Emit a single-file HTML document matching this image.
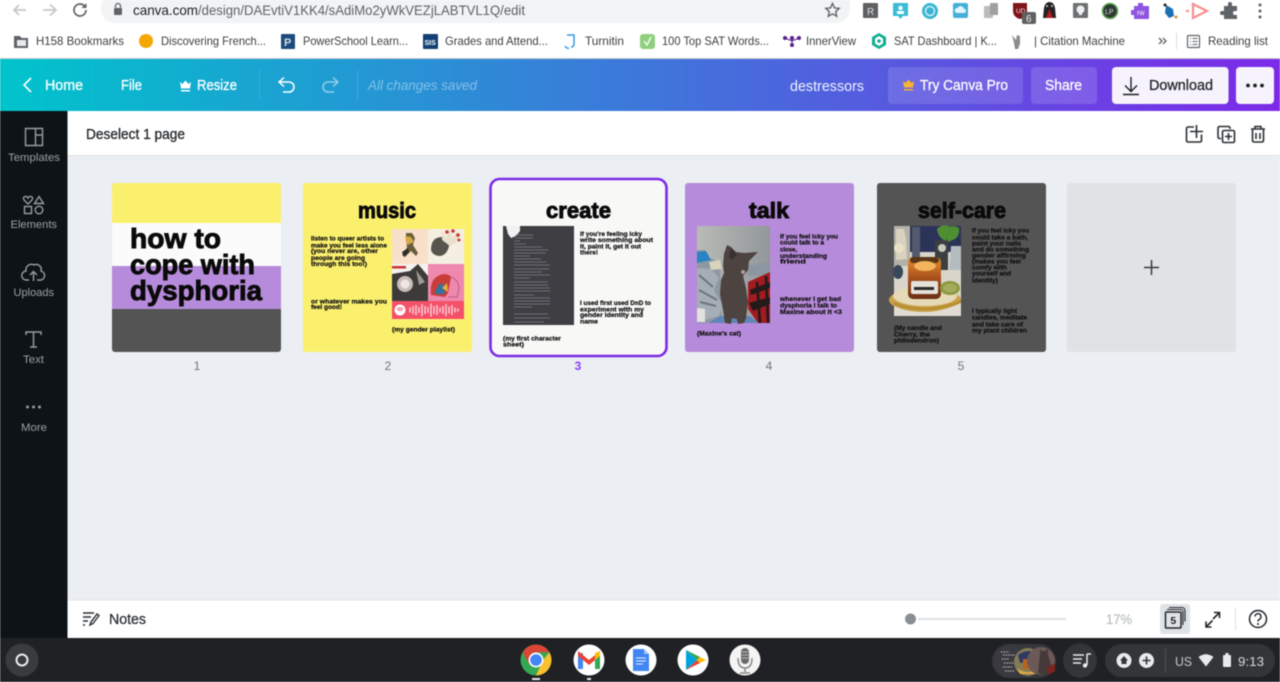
<!DOCTYPE html>
<html lang="en"><head><meta charset="utf-8"><title>destressors - Canva</title>
<style>
html,body{margin:0;padding:0;width:1280px;height:682px;overflow:hidden;background:#fff}
svg{display:block;filter:blur(.5px)}
text{font-family:"Liberation Sans",sans-serif}
.c{font-size:12px;fill:#5f6368}
.b{font-size:12px;fill:#3c4043}
.w{font-size:14.500px;fill:#fff;stroke:#fff;stroke-width:.28}
.s{font-size:11px;fill:#9da0a3}
.h{font-size:22px;font-weight:bold;fill:#0a0a0a;stroke:#0a0a0a;stroke-width:.9}
.t{font-size:28px;font-weight:bold;fill:#0a0a0a;stroke:#0a0a0a;stroke-width:.9}
.p{font-size:6.800px;font-weight:bold;fill:#111;stroke:#111;stroke-width:.22}
.n{font-size:12px;fill:#6f7680}
.i{fill:none;stroke:#2b2f33;stroke-width:1.6}
.g{fill:none;stroke:#9a9da0;stroke-width:1.4}
</style></head><body>
<svg width="1280" height="682" viewBox="0 0 1280 682" xmlns="http://www.w3.org/2000/svg">
<defs>
<linearGradient id="top" x1="0" x2="1" y1="0" y2="0"><stop offset="0" stop-color="#00c4cc"/><stop offset="1" stop-color="#7d2ae8"/></linearGradient>
<linearGradient id="jar" x1="0" x2="0" y1="0" y2="1"><stop offset="0" stop-color="#e8902f"/><stop offset=".5" stop-color="#a8501c"/><stop offset="1" stop-color="#6a2f14"/></linearGradient>
<linearGradient id="wall" x1="0" x2="1" y1="0" y2="0"><stop offset="0" stop-color="#b9bbb6"/><stop offset="1" stop-color="#92979b"/></linearGradient>
</defs>

<!-- browser chrome -->
<rect width="1280" height="59" fill="#fff"/>
<rect y="58" width="1280" height="1" fill="#c8cacc"/>
<path d="M26 10H14M19 5l-5 5 5 5" fill="none" stroke="#c4c7cb" stroke-width="1.700"/>
<path d="M44 10H57M51 4.500l6 5.500-6 5.500" fill="none" stroke="#c4c7cb" stroke-width="1.700" transform="translate(-1 0)"/>
<path d="M86 10a6 6 0 1 1-1.800-4.300" fill="none" stroke="#5f6368" stroke-width="1.700"/><path d="M86.500 3v5h-5z" fill="#5f6368"/>
<path d="M115 -5H850V9a14 14 0 0 1-14 14H115A14 14 0 0 1 101 9A14 14 0 0 1 115 -5Z" fill="#f1f3f4"/>
<rect x="114" y="8" width="8" height="7" rx="1" fill="#5f6368"/><path d="M115.500 8V6a2.500 2.500 0 0 1 5 0v2" fill="none" stroke="#5f6368" stroke-width="1.200"/>
<text x="133" y="15" font-size="14" fill="#202124" textLength="65" lengthAdjust="spacingAndGlyphs">canva.com</text>
<text x="198" y="15" font-size="14" fill="#5f6368" textLength="327" lengthAdjust="spacingAndGlyphs">/design/DAEvtiV1KK4/sAdiMo2yWkVEZjLABTVL1Q/edit</text>
<path d="M832.500 3.500l2 4.400 4.700.5-3.500 3.200 1 4.700-4.200-2.400-4.200 2.400 1-4.700-3.500-3.200 4.700-.5z" fill="none" stroke="#5f6368" stroke-width="1.400"/>

<!-- extensions -->
<rect x="863" y="3" width="15" height="15" rx="1" fill="#5e6062"/><text x="867" y="15" font-size="10" fill="#ddd">R</text>
<path d="M893 3h15v13h-5l-2.500 3-2.500-3h-5z" fill="#39bcd8"/><circle cx="900.500" cy="8" r="2.200" fill="#fff"/><rect x="897" y="11" width="7" height="3" fill="#fff"/>
<circle cx="930" cy="11" r="8" fill="#39b5cf"/><circle cx="930" cy="11" r="4.500" fill="none" stroke="#cdeef5" stroke-width="1.500"/>
<rect x="953" y="3" width="15" height="15" rx="2" fill="#45afd8"/><path d="M957 13a2.500 2.500 0 0 1 .5-5 3.500 3.500 0 0 1 6.500 1 2 2 0 0 1 0 4z" fill="#e4f5fb"/>
<rect x="984" y="6" width="9" height="12" rx="1" fill="#b9bbbc"/><rect x="990" y="3" width="8" height="12" rx="1" fill="#9ea0a1"/>
<path d="M1013 3h14v8q0 6-7 8-7-2-7-8z" fill="#7f1519"/><text x="1016" y="13" font-size="6.500" fill="#eee">UD</text>
<rect x="1022" y="12" width="14" height="12" rx="2" fill="#5f6062"/><text x="1026" y="22" font-size="10" fill="#eee">6</text>
<path d="M1043 18l1-10q1-6 5.500-6t5.500 6l1 10z" fill="#222"/><path d="M1046 18l3.500-9 3.500 9z" fill="#b81c22"/><circle cx="1047" cy="6" r="1" fill="#ccc"/><circle cx="1052" cy="6" r="1" fill="#ccc"/>
<rect x="1073" y="3" width="15" height="15" rx="1" fill="#6e7173"/><circle cx="1080.500" cy="9.500" r="4" fill="#f0f0f0"/><rect x="1079" y="13" width="3" height="2" fill="#f0f0f0"/>
<circle cx="1110" cy="11" r="7.500" fill="#303a34" stroke="#5faa55" stroke-width="1.500"/><text x="1105" y="14" font-size="7" fill="#ddd">LP</text>
<path d="M1134 6h4v-3h5v3h6v13h-15v-4h-3v-5h3z" fill="#8d55e0"/><text x="1137" y="15" font-size="7" fill="#fff">rw</text>
<path d="M1166 5l7 4 1 7-5 2-4-5z" fill="#1d6fb5"/><circle cx="1165" cy="5" r="1.500" fill="#222"/><circle cx="1176" cy="17" r="1.500" fill="#e0902c"/>
<path d="M1193 4l14 7-14 7zM1189 11h-3" fill="none" stroke="#f78f8f" stroke-width="2.200"/>
<path d="M1224 6h4v-2a2 2 0 0 1 4 0v2h5v5h-2a2 2 0 0 0 0 4h2v4h-13v-4h-2a2 2 0 0 1 0-4h2z" fill="#5f6368"/>
<circle cx="1260" cy="5" r="1.500" fill="#5f6368"/><circle cx="1260" cy="11" r="1.500" fill="#5f6368"/><circle cx="1260" cy="17" r="1.500" fill="#5f6368"/>

<!-- bookmarks -->
<path d="M14 36h6l1.500 2H28v10H14z" fill="#5f6368"/><rect x="17" y="40" width="9" height="6" fill="#e8eaed"/>
<text class="b" x="36" y="45" textLength="88" lengthAdjust="spacingAndGlyphs">H158 Bookmarks</text>
<circle cx="146" cy="41" r="7" fill="#f4a700"/>
<text class="b" x="161" y="45" textLength="105" lengthAdjust="spacingAndGlyphs">Discovering French...</text>
<rect x="281" y="34" width="14" height="15" rx="1" fill="#1b4a7c"/><text x="284" y="46" font-size="11" font-weight="bold" fill="#cfd9e4">P</text>
<text class="b" x="303" y="45" textLength="105" lengthAdjust="spacingAndGlyphs">PowerSchool Learn...</text>
<rect x="423" y="34" width="15" height="15" rx="1" fill="#133f75"/><text x="424.500" y="45" font-size="7" font-weight="bold" fill="#fff">SIS</text>
<text class="b" x="445" y="45" textLength="103" lengthAdjust="spacingAndGlyphs">Grades and Attend...</text>
<path d="M567 35h7v9q0 3-3 3M565 46q2 3 4 2" fill="none" stroke="#3a9be0" stroke-width="1.500"/>
<text class="b" x="585" y="45" textLength="39" lengthAdjust="spacingAndGlyphs">Turnitin</text>
<rect x="640" y="34" width="15" height="15" rx="3" fill="#8fd07f"/><path d="M644 41l3 4 4-8" fill="none" stroke="#fff" stroke-width="1.300"/>
<text class="b" x="662" y="45" textLength="107" lengthAdjust="spacingAndGlyphs">100 Top SAT Words...</text>
<circle cx="785" cy="38" r="2" fill="#5a1e8c"/><circle cx="799" cy="38" r="2" fill="#5a1e8c"/><circle cx="792" cy="38" r="2" fill="#5a1e8c"/><circle cx="792" cy="45" r="2" fill="#5a1e8c"/><path d="M785 38l7 3 7-3M792 38v7" fill="none" stroke="#5a1e8c"/>
<text class="b" x="806" y="45" textLength="50" lengthAdjust="spacingAndGlyphs">InnerView</text>
<path d="M879 33l7 4v8l-7 4-7-4v-8z" fill="#0fae91"/><path d="M879 36l4 2.500v5l-4 2.500-4-2.500v-5z" fill="#fff"/><circle cx="879" cy="41" r="1.800" fill="#0fae91"/>
<text class="b" x="894" y="45" textLength="103" lengthAdjust="spacingAndGlyphs">SAT Dashboard | K...</text>
<path d="M1012 35l4 5 1-5 3 1v8l-2 5h-3l-1-6z" fill="#8a8d8a"/>
<text class="b" x="1034" y="45" textLength="91" lengthAdjust="spacingAndGlyphs">| Citation Machine</text>
<path d="M1159 38l3 3-3 3M1163 38l3 3-3 3" fill="none" stroke="#5f6368" stroke-width="1.300"/>
<rect x="1176" y="33" width="1" height="16" fill="#dadce0"/>
<rect x="1187.500" y="35.500" width="12" height="12" rx="1" fill="none" stroke="#5f6368" stroke-width="1.200"/><path d="M1190 38.500h1M1192.500 38.500h5M1190 41.500h1M1192.500 41.500h5M1190 44.500h1M1192.500 44.500h5" stroke="#5f6368"/>
<text class="b" x="1208" y="45" textLength="60" lengthAdjust="spacingAndGlyphs">Reading list</text>

<!-- canva top bar -->
<rect y="59" width="1280" height="52" fill="url(#top)"/>
<path d="M31 78l-7 7 7 7" fill="none" stroke="#fff" stroke-width="1.600"/>
<text class="w" x="45" y="90" textLength="38" lengthAdjust="spacingAndGlyphs">Home</text>
<text class="w" x="121" y="90" textLength="21" lengthAdjust="spacingAndGlyphs">File</text>
<path d="M180 82l2.500 2 3-3.500 3 3.500 2.500-2-1 6.500h-9zM181 90h9v1.500h-9z" fill="#fff"/>
<text class="w" x="197" y="90" textLength="40" lengthAdjust="spacingAndGlyphs">Resize</text>
<rect x="259" y="70" width="1" height="30" fill="#fff" fill-opacity=".13"/>
<path d="M284 78l-5 4.500 5 4.500M279 82.500h10a5 5 0 0 1 0 10h-6" fill="none" stroke="#fff" stroke-width="1.500" transform="translate(0 -.5)"/>
<path d="M333 78l5 4.500-5 4.500M338 82.500h-10a5 5 0 0 0 0 10h6" fill="none" stroke="#fff" stroke-opacity=".5" stroke-width="1.500" transform="translate(0 -.5)"/>
<rect x="357" y="70" width="1" height="30" fill="#fff" fill-opacity=".13"/>
<text x="368" y="90" font-size="14" font-style="italic" fill="#fff" fill-opacity=".42" textLength="109" lengthAdjust="spacingAndGlyphs">All changes saved</text>
<text x="790" y="91" font-size="14.500" fill="#fff" fill-opacity=".92" textLength="74" lengthAdjust="spacingAndGlyphs">destressors</text>
<rect x="888" y="67" width="135" height="37" rx="4" fill="#fff" fill-opacity=".13"/>
<path d="M903 81l2.500 2 3-3.500 3 3.500 2.500-2-1 6.500h-9zM904 89h9v1.500h-9z" fill="#f9b233"/>
<text class="w" x="920" y="90" textLength="88" lengthAdjust="spacingAndGlyphs">Try Canva Pro</text>
<rect x="1031" y="67" width="66" height="37" rx="4" fill="#fff" fill-opacity=".15"/>
<text class="w" x="1045" y="90" textLength="37" lengthAdjust="spacingAndGlyphs">Share</text>
<rect x="1112" y="67" width="116.500" height="37" rx="4" fill="#f6f3fd"/>
<path d="M1131 77v14M1125 85.500l6 6 6-6M1123 94.500h16" fill="none" stroke="#1c1f22" stroke-width="1.400"/>
<text x="1149" y="90" font-size="14.500" fill="#22262a" stroke="#22262a" stroke-width=".28" textLength="64" lengthAdjust="spacingAndGlyphs">Download</text>
<rect x="1236" y="67" width="38" height="37" rx="4" fill="#f6f3fd"/>
<circle cx="1248" cy="85.500" r="1.900" fill="#1c1f22"/><circle cx="1255" cy="85.500" r="1.900" fill="#1c1f22"/><circle cx="1262" cy="85.500" r="1.900" fill="#1c1f22"/>

<!-- sidebar -->
<rect y="111" width="67.500" height="527" fill="#0e1318"/>
<path d="M25.500 128.500h17v17h-17zM35.500 128.500v17M35.500 135h7" class="g"/>
<text class="s" x="8" y="161" textLength="52" lengthAdjust="spacingAndGlyphs">Templates</text>
<path d="M28 204l-4-4q-1.500-3 1-3.500 2-.2 3 1.500 1-1.700 3-1.500 2.500.5 1 3.500zM39 196.500l4.500 7h-9z" class="g"/><rect x="24.500" y="206.500" width="7" height="7" class="g"/><circle cx="39" cy="210" r="3.800" class="g"/>
<text class="s" x="10.500" y="228" textLength="46.500" lengthAdjust="spacingAndGlyphs">Elements</text>
<path d="M29 280h-2.500a4.500 4.500 0 0 1-.5-9 5.500 5.500 0 0 1 8-6 5 5 0 0 1 7 6 4.500 4.500 0 0 1-2 9H37M33.500 281v-9M30 275l3.500-3.500 3.500 3.500" class="g"/>
<text class="s" x="13.500" y="296" textLength="40.500" lengthAdjust="spacingAndGlyphs">Uploads</text>
<path d="M26 335v-3h15v3M33.500 332v15M30 347h7" class="g"/>
<text class="s" x="23" y="363" textLength="21" lengthAdjust="spacingAndGlyphs">Text</text>
<circle cx="27.500" cy="407" r="1.500" fill="#9a9da0"/><circle cx="33.500" cy="407" r="1.500" fill="#9a9da0"/><circle cx="39.500" cy="407" r="1.500" fill="#9a9da0"/>
<text class="s" x="21" y="431" textLength="26" lengthAdjust="spacingAndGlyphs">More</text>

<!-- main -->
<rect x="67.500" y="111" width="1212.500" height="45" fill="#fff"/>
<rect x="67.500" y="156" width="1212.500" height="444" fill="#ebeef2"/>
<rect x="67.500" y="155" width="1212.500" height="1" fill="#dfe2e6"/>
<text x="86" y="139" font-size="14.500" fill="#23272b" stroke="#23272b" stroke-width=".3" textLength="99" lengthAdjust="spacingAndGlyphs">Deselect 1 page</text>
<path d="M1194 127.500h-6a1.500 1.500 0 0 0-1.500 1.500v12a1.500 1.500 0 0 0 1.500 1.500h12a1.500 1.500 0 0 0 1.500-1.500v-6M1196.500 125.500v13M1190 132h13" class="i" transform="translate(0 -.5)"/>
<path d="M1221 138.500h-1.500a1.500 1.500 0 0 1-1.500-1.500v-9a1.500 1.500 0 0 1 1.500-1.500h9a1.500 1.500 0 0 1 1.500 1.500v1" class="i"/><rect x="1222.500" y="130.500" width="12" height="12" rx="1.500" class="i"/><path d="M1228.500 133v7M1225 136.500h7" class="i"/>
<path d="M1251 129h14M1255 129v-2.500h6v2.500M1252.500 129.500v11a1.500 1.500 0 0 0 1.500 1.500h8a1.500 1.500 0 0 0 1.500-1.500v-11M1256 133v6M1260 133v6" class="i"/>

<!-- slide 1 -->
<rect x="112" y="183" width="169" height="169" rx="3" fill="#545454"/>
<path d="M112 223v-37a3 3 0 0 1 3-3h163a3 3 0 0 1 3 3v37z" fill="#fbf06e"/>
<rect x="112" y="223" width="169" height="43" fill="#fbfbfb"/>
<rect x="112" y="266" width="169" height="43" fill="#b78bdb"/>
<text class="t" x="130" y="248" textLength="91" lengthAdjust="spacingAndGlyphs">how to</text>
<text class="t" x="130" y="274" textLength="125" lengthAdjust="spacingAndGlyphs">cope with</text>
<text class="t" x="130" y="300" textLength="132" lengthAdjust="spacingAndGlyphs">dysphoria</text>
<text class="n" x="197" y="370" text-anchor="middle">1</text>

<!-- slide 2 -->
<rect x="303" y="183" width="169" height="169" rx="3" fill="#fbf06e"/>
<text class="h" x="358" y="218" textLength="58" lengthAdjust="spacingAndGlyphs">music</text>
<text class="p" x="311" y="240.500" textLength="73" lengthAdjust="spacingAndGlyphs">listen to queer artists to</text>
<text class="p" x="311" y="247.500" textLength="76" lengthAdjust="spacingAndGlyphs">make you feel less alone</text>
<text class="p" x="311" y="253" textLength="67" lengthAdjust="spacingAndGlyphs">(you never are, other</text>
<text class="p" x="311" y="260" textLength="54" lengthAdjust="spacingAndGlyphs">people are going</text>
<text class="p" x="311" y="266" textLength="56" lengthAdjust="spacingAndGlyphs">through this too!)</text>
<text class="p" x="311" y="303.500" textLength="76" lengthAdjust="spacingAndGlyphs">or whatever makes you</text>
<text class="p" x="311" y="309" textLength="31" lengthAdjust="spacingAndGlyphs">feel good!</text>
<text class="p" x="392" y="331.500" textLength="63" lengthAdjust="spacingAndGlyphs">(my gender playlist)</text>
<rect x="392" y="229" width="36" height="35" fill="#f8e0ca"/>
<path d="M406 233l6 0 3 5-2 7 5 8-2 3-5-5-6 6-3-2 5-7-1-8z" fill="#6a5f3a"/><path d="M405 236l6 1 3 5-7 3z" fill="#d8a848"/><path d="M402 252l6-4 1 4-5 5z" fill="#2c2c28"/>
<rect x="428" y="229" width="36" height="35" fill="#f5efe2"/>
<path d="M431 250q0-13 11-13 6 1 7 9-2 9-9 10-7 0-9-6z" fill="#55544f"/><path d="M442 231l4 7 4-8 3 8 3-6 4 8-10 6-8-6z" fill="#eadfce"/><circle cx="447" cy="232" r="1.800" fill="#c8392f"/><circle cx="453" cy="231" r="1.800" fill="#c8392f"/><circle cx="458" cy="235" r="1.800" fill="#c8392f"/><circle cx="459" cy="240" r="1.500" fill="#c8392f"/>
<rect x="392" y="264" width="36" height="37" fill="#f4f2ef"/>
<path d="M392 274l18-3 8-7 10 12v25h-36z" fill="#3c3b39"/><circle cx="405" cy="284" r="8" fill="#c9bdb8"/><circle cx="405" cy="284" r="4.500" fill="#f2e6e4"/><path d="M416 270l9 12-6 3z" fill="#9a9a94"/><rect x="392" y="266" width="14" height="2.500" fill="#c33"/>
<rect x="428" y="264" width="36" height="37" fill="#ef88ae"/>
<path d="M431 295q-2-19 13-21 5 0 7 3l-3 16-3 4z" fill="#c93d3a"/><path d="M435 294q1-9 8-11l2 11z" fill="#3273a0"/><path d="M442 288l5-5 1 9z" fill="#e4b03b"/><path d="M451 277q8 3 8 12l-2 8h-9" fill="none" stroke="#b95f86"/>
<rect x="392" y="301" width="72" height="18" fill="#f4506a"/>
<circle cx="400" cy="310" r="5.500" fill="#fff"/><path d="M397 308.500q3-1 6 0M397.500 310.500q2.500-1 5 0" stroke="#f4506a" fill="none"/>
<path d="M410 307.500v5M413 306v8M416 305v10M419 307v6M422 304v12M425 306v8M428 307v6M431 303.500v13M434 306v8M437 305v10M440 307.500v5M443 306v8M446 304v12M449 306.500v7M452 305v10M455 307.500v5M458 308.500v3" stroke="#fcd4da" stroke-width="1.400"/>
<text class="n" x="388" y="370" text-anchor="middle">2</text>

<!-- slide 3 -->
<rect x="490.500" y="179" width="176" height="177" rx="9" fill="#f8f8f7" stroke="#7d2ae8" stroke-width="2.600"/>
<text class="h" x="546" y="218" textLength="65" lengthAdjust="spacingAndGlyphs">create</text>
<rect x="503" y="226" width="71" height="99" fill="#3e3e43"/>
<path d="M506 226h14v5l-4 5-5 2-3-4z" fill="#f1f1f1"/>
<path d="M515 235h18M515 238h18M514 241h6M514 244h12M514 247h28M514 250h34M514 253h32M514 256h16M514 259h27M514 262h32M514 265h36M514 269h35M514 272h28M514 275h36M514 278h16M514 282h34M514 285h34M514 288h36M514 291h36M514 295h20M514 298h36M514 301h36M514 304h36M514 307h18M514 314h34M514 318h36M514 322h30" stroke="#85858b" stroke-width=".9" stroke-opacity=".7"/>
<text class="p" x="580" y="236" textLength="62" lengthAdjust="spacingAndGlyphs">if you're feeling icky</text>
<text class="p" x="580" y="242" textLength="73" lengthAdjust="spacingAndGlyphs">write something about</text>
<text class="p" x="580" y="248.500" textLength="61" lengthAdjust="spacingAndGlyphs">it, paint it, get it out</text>
<text class="p" x="580" y="254.500" textLength="18" lengthAdjust="spacingAndGlyphs">there!</text>
<text class="p" x="580" y="305" textLength="71" lengthAdjust="spacingAndGlyphs">I used first used DnD to</text>
<text class="p" x="580" y="311.500" textLength="64" lengthAdjust="spacingAndGlyphs">experiment with my</text>
<text class="p" x="580" y="317" textLength="63" lengthAdjust="spacingAndGlyphs">gender identity and</text>
<text class="p" x="580" y="323.500" textLength="18" lengthAdjust="spacingAndGlyphs">name</text>
<text class="p" x="503" y="340.500" textLength="58" lengthAdjust="spacingAndGlyphs">(my first character</text>
<text class="p" x="503" y="346.500" textLength="21" lengthAdjust="spacingAndGlyphs">sheet)</text>
<text x="578" y="370" text-anchor="middle" font-size="12" font-weight="bold" fill="#8b3dff">3</text>

<!-- slide 4 -->
<rect x="685" y="183" width="169" height="169" rx="3" fill="#b78bdb"/>
<text class="h" x="749" y="218" textLength="40" lengthAdjust="spacingAndGlyphs">talk</text>
<rect x="697" y="226" width="73" height="97" fill="url(#wall)"/>
<path d="M697 250l8 0 5 8 10 5 2 60h-25z" fill="#8e98a3"/>
<path d="M697 252l9-1 5 9-14 3z" fill="#2a83c2"/>
<path d="M709 262l11-2 2 9-11 1z" fill="#d9d3bd"/>
<path d="M697 268l14 1 8 9-5 12 9 16-4 10-22 6z" fill="#a5aeb6"/><path d="M699 275l14 12M699 290l18 10M700 302l16 4" stroke="#6c7580" stroke-width="2"/><path d="M697 308l8 1v13h-8z" fill="#e4e2de"/>
<path d="M708 323l12-7 30 0 9 7z" fill="#5f86b5"/>
<path d="M746 266l24-4v12l-22 2z" fill="#8c96a0"/>
<path d="M748 282l22-10v51h-12l-10-14z" fill="#a11b20"/>
<path d="M750 290l20-8v6l-19 7zM749 303l21-6v7l-17 7zM757 282l3 41M766 276l2 47" stroke="none" fill="#231a1a"/><path d="M757 282l3 41M766 276l2 47" stroke="#231a1a" stroke-width="2.600"/>
<path d="M723 265l1-11 3-9 4 2 5 5 8 1 14-1-9 9-1 9-5 6 3 12 2 14-2 16-2 5-6 1-1-5-5-1-1 6-6-1-2-13-3-16 1-14 3-7z" fill="#4d4341"/>
<path d="M731 248l6 7-5 5-3-3z" fill="#3a3130"/><circle cx="743" cy="272" r="2" fill="#b89b98"/>
<text class="p" x="780" y="238.500" textLength="58" lengthAdjust="spacingAndGlyphs">if you feel icky you</text>
<text class="p" x="780" y="244.500" textLength="44" lengthAdjust="spacingAndGlyphs">could talk to a</text>
<text class="p" x="780" y="251.500" textLength="17" lengthAdjust="spacingAndGlyphs">close,</text>
<text class="p" x="780" y="258" textLength="47" lengthAdjust="spacingAndGlyphs">understanding</text>
<text class="p" x="780" y="263.500" textLength="26" lengthAdjust="spacingAndGlyphs">friend</text>
<text class="p" x="780" y="301" textLength="61" lengthAdjust="spacingAndGlyphs">whenever I get bad</text>
<text class="p" x="780" y="307.500" textLength="57" lengthAdjust="spacingAndGlyphs">dysphoria I talk to</text>
<text class="p" x="780" y="314" textLength="62" lengthAdjust="spacingAndGlyphs">Maxine about it &lt;3</text>
<text class="p" x="697" y="335.500" textLength="44" lengthAdjust="spacingAndGlyphs">(Maxine's cat)</text>
<text class="n" x="769" y="370" text-anchor="middle">4</text>

<!-- slide 5 -->
<rect x="877" y="183" width="169" height="169" rx="3" fill="#545454"/>
<text class="h" x="918" y="218" textLength="88" lengthAdjust="spacingAndGlyphs">self-care</text>
<rect x="894" y="226" width="67" height="90" fill="#d9d5ca"/>
<rect x="910" y="226" width="51" height="26" fill="#2c3358"/>
<rect x="894" y="226" width="16" height="40" fill="#b4b2a8"/>
<path d="M896 229h8l2 10 1 20-11 1z" fill="#d8d2bf"/><circle cx="899" cy="248" r="5" fill="#e9e1c5"/>
<path d="M912 227h8v30h-8z" fill="#545a6e"/>
<path d="M935 240h13v30h-13z" fill="#3b3f3f"/><circle cx="942" cy="248" r="4" fill="#c9c8bd"/>
<path d="M937 229q5-5 12-3 1 8-3 15-8-3-9-12zM945 229q8-5 14-1 1 7-4 11l-7 3z" fill="#4f8f33"/>
<path d="M951 246h10v24h-12z" fill="#b4bcc0"/>
<ellipse cx="925" cy="300" rx="36" ry="12" fill="#c9a24a"/>
<ellipse cx="925" cy="296" rx="32" ry="10" fill="#e6d9b8"/>
<path d="M894 306q30 14 67-3v13h-67z" fill="#e1dcd3"/>
<path d="M894 302q30 12 67-2v3q-35 14-67 2z" fill="#b98f34"/>
<rect x="908" y="257" width="33" height="42" rx="5" fill="url(#jar)"/>
<rect x="910" y="257" width="29" height="6" rx="3" fill="#5a3518"/>
<ellipse cx="925" cy="266" rx="11" ry="5" fill="#f3b45c"/>
<rect x="911" y="281" width="27" height="13" rx="2" fill="#e5e1da"/><rect x="914" y="287" width="20" height="3" fill="#2a2a2a"/>
<ellipse cx="950" cy="288" rx="10" ry="7" fill="#8a9a3f"/><ellipse cx="950" cy="288" rx="7" ry="4.500" fill="#a4ab5c"/>
<ellipse cx="898" cy="272" rx="5" ry="7" fill="#38485a"/>
<text class="p" x="972" y="232.500" textLength="57" lengthAdjust="spacingAndGlyphs">if you feel icky you</text>
<text class="p" x="972" y="239.500" textLength="56" lengthAdjust="spacingAndGlyphs">could take a bath,</text>
<text class="p" x="972" y="245.500" textLength="49" lengthAdjust="spacingAndGlyphs">paint your nails</text>
<text class="p" x="972" y="251.500" textLength="57" lengthAdjust="spacingAndGlyphs">and do something</text>
<text class="p" x="972" y="257.500" textLength="54" lengthAdjust="spacingAndGlyphs">gender affirming</text>
<text class="p" x="972" y="263.500" textLength="49" lengthAdjust="spacingAndGlyphs">(makes you feel</text>
<text class="p" x="972" y="269.500" textLength="35" lengthAdjust="spacingAndGlyphs">comfy with</text>
<text class="p" x="972" y="275.500" textLength="39" lengthAdjust="spacingAndGlyphs">yourself and</text>
<text class="p" x="972" y="282.500" textLength="26" lengthAdjust="spacingAndGlyphs">identity)</text>
<text class="p" x="972" y="313" textLength="45" lengthAdjust="spacingAndGlyphs">I typically light</text>
<text class="p" x="972" y="319.500" textLength="55" lengthAdjust="spacingAndGlyphs">candles, meditate</text>
<text class="p" x="972" y="326.500" textLength="51" lengthAdjust="spacingAndGlyphs">and take care of</text>
<text class="p" x="972" y="332.500" textLength="55" lengthAdjust="spacingAndGlyphs">my plant children</text>
<text class="p" x="894" y="330" textLength="48" lengthAdjust="spacingAndGlyphs">(My candle and</text>
<text class="p" x="894" y="336.500" textLength="36" lengthAdjust="spacingAndGlyphs">Cherry, the</text>
<text class="p" x="894" y="342.500" textLength="45" lengthAdjust="spacingAndGlyphs">philodendron)</text>
<text class="n" x="961" y="370" text-anchor="middle">5</text>

<!-- add page -->
<rect x="1067" y="183" width="169" height="169" rx="3" fill="#e0e3e6"/>
<path d="M1151.500 260v15M1144 267.500h15" stroke="#353a3f" stroke-width="1.500"/>

<!-- bottom bar -->
<rect x="67.500" y="600" width="1212.500" height="38" fill="#fff"/>
<rect x="67.500" y="599.500" width="1212.500" height="1" fill="#e1e4e7"/>
<path d="M83 613h11M83 617h8M83 621h5M83 625h2M90 625l1-3 6-8 2 1.500-6 8z" fill="none" stroke="#2b2f33" stroke-width="1.400"/>
<text x="109" y="624" font-size="14.500" fill="#2b2f33" stroke="#2b2f33" stroke-width=".28" textLength="37" lengthAdjust="spacingAndGlyphs">Notes</text>
<circle cx="910.500" cy="619" r="5.500" fill="#8b8f94"/>
<rect x="918" y="618" width="148" height="2" fill="#e0e3e6"/>
<text x="1106" y="624" font-size="13.500" fill="#bcc0c4" stroke="#bcc0c4" stroke-width=".25" textLength="26" lengthAdjust="spacingAndGlyphs">17%</text>
<rect x="1160" y="604" width="30" height="30" rx="3" fill="#e0e3e6"/>
<rect x="1165.500" y="612" width="15.500" height="16" rx="1" fill="#e0e3e6" stroke="#22262a" stroke-width="1.500"/>
<path d="M1167 609.500h14a2 2 0 0 1 2 2v13.500M1169 607.500h13a3 3 0 0 1 3 3v11" fill="none" stroke="#22262a" stroke-width="1.100"/>
<text x="1173.300" y="624" font-size="10.500" font-weight="bold" fill="#22262a" text-anchor="middle">5</text>
<path d="M1206 627l6.500-6.500M1206 621.500v5.500h5.500M1219.500 612.500l-6.500 6.500M1214 612.500h5.500v5.500" fill="none" stroke="#22262a" stroke-width="1.600"/>
<rect x="1235" y="608" width="1" height="22" fill="#dfe2e5"/>
<circle cx="1258" cy="619" r="8.500" fill="none" stroke="#22262a" stroke-width="1.500"/>
<path d="M1255 616.500a3 3 0 1 1 4.500 2.700q-1.500.8-1.500 2.300" fill="none" stroke="#22262a" stroke-width="1.400"/><circle cx="1258" cy="624" r="1" fill="#22262a"/>

<!-- shelf -->
<rect y="638" width="1280" height="44" fill="#202124"/>
<circle cx="22" cy="660" r="16.500" fill="#3a3b3e"/><circle cx="22" cy="660" r="5.500" fill="none" stroke="#e8eaed" stroke-width="2"/>

<circle cx="536" cy="660" r="15.500" fill="#34a853"/>
<path d="M522.600 652.300A15.500 15.500 0 0 1 549.400 652.300H536Z" fill="#db4437"/>
<path d="M549.400 652.300A15.500 15.500 0 0 1 536 675.500L543 660Z" fill="#fbc02d"/>
<path d="M522.600 652.300L536 652.300 529 664 522.600 652.300Z" fill="#db4437"/>
<circle cx="536" cy="660" r="7.500" fill="#fff"/><circle cx="536" cy="660" r="5.800" fill="#4285f4"/>
<rect x="532" y="678" width="8" height="2" fill="#e8eaed"/>

<circle cx="589" cy="660" r="15.500" fill="#fff"/>
<path d="M578 653h5v16h-5z" fill="#4285f4"/><path d="M595 653h5v16h-5z" fill="#34a853"/><path d="M578 651l11 9 11-9v5l-11 9-11-9z" fill="#ea4335"/><path d="M595 653l5-2v5l-5 4z" fill="#fbbc04"/>
<rect x="587" y="678" width="4" height="2" fill="#e8eaed"/>

<circle cx="641" cy="660" r="15.500" fill="#fff"/>
<path d="M633 649h11l5 5v17h-16z" fill="#4285f4"/><path d="M644 649l5 5h-5z" fill="#a1c2fa"/><path d="M636 658h10M636 661h10M636 664h7" stroke="#e8f0fe"/>

<circle cx="693" cy="660" r="15.500" fill="#fff"/>
<path d="M686 650l11 10-11 10z" fill="#00a3e0"/><path d="M686 650l14 7-3 3z" fill="#34a853"/><path d="M686 670l14-7-3-3z" fill="#ea4335"/><path d="M700 657l6 3-6 3-3-3z" fill="#fbbc04"/>

<circle cx="745" cy="660" r="15.500" fill="#f4f4f4"/>
<rect x="741" y="648" width="8" height="16" rx="4" fill="#6a6a6a"/>
<path d="M738 658q0 10 7 10t7-10M745 668v4M740 673h10" fill="none" stroke="#888" stroke-width="1.500"/>
<path d="M741.500 652h7M741.500 655h7M741.500 658h7" stroke="#ccc" stroke-width=".8"/>

<rect x="992" y="644" width="64" height="34" rx="17" fill="#37383b"/>
<circle cx="1009" cy="661" r="15" fill="#3a3a40"/>
<path d="M1001 652h8M1003 655h12M1002 659h7M1004 663h13M1003 667h9M1005 671h10" stroke="#c4c4c4" stroke-width="1" stroke-dasharray="1.500 1"/>
<circle cx="1028" cy="662" r="14" fill="#857a56"/><path d="M1018 655q8-6 17-3l-2 9-13 2z" fill="#2f3a63"/><path d="M1017 668q10 8 22 0l-3 6h-16z" fill="#d9aa47"/><rect x="1023" y="659" width="9" height="10" fill="#b8641f"/>
<circle cx="1041" cy="661" r="14" fill="#6c5856"/><path d="M1040 649l2 2 3 0 3-2 0 6 2 6 3 10-9 4-6-2 1-10 1-8z" fill="#46393a"/><path d="M1047 668l8-5v8l-6 4z" fill="#7d2420"/>

<circle cx="1080" cy="660.500" r="17" fill="#343538"/>
<path d="M1073 655h11M1073 659h9M1073 663h8" stroke="#e8eaed" stroke-width="1.500"/><path d="M1087 654v11M1087 654h4" fill="none" stroke="#e8eaed" stroke-width="1.500"/><circle cx="1085" cy="665.500" r="2.200" fill="#e8eaed"/>

<rect x="1105" y="644" width="170" height="33" rx="16.500" fill="#343538"/>
<circle cx="1124" cy="660.500" r="7.500" fill="#e8eaed"/><path d="M1124 656l4 4.500-1.500 0v3.500h-5v-3.500H1120z" fill="#343538"/>
<circle cx="1146.500" cy="660.500" r="7.500" fill="#e8eaed"/><path d="M1146.500 656.500v8M1142.500 660.500h8" stroke="#343538" stroke-width="1.600"/>
<rect x="1165" y="648" width="1" height="25" fill="#505154"/>
<text x="1175" y="666" font-size="13" fill="#c4c7ca" textLength="17" lengthAdjust="spacingAndGlyphs">US</text>
<path d="M1198.500 657q7.500-5.500 15 0l-7.500 9.500z" fill="#e8eaed"/>
<rect x="1223" y="655" width="8" height="12" rx="1" fill="#e8eaed"/><rect x="1225.500" y="653" width="3" height="2" fill="#e8eaed"/>
<text x="1238" y="666" font-size="13" fill="#d6d8da" textLength="26" lengthAdjust="spacingAndGlyphs">9:13</text>
</svg>
</body></html>
